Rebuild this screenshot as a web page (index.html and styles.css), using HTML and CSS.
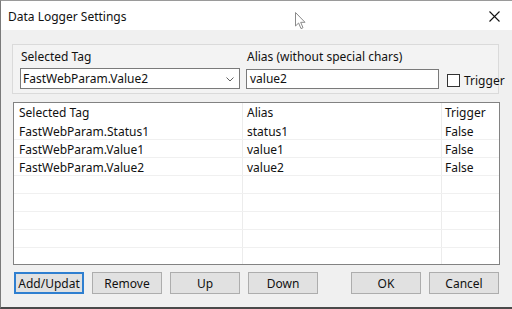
FILE: index.html
```html
<!DOCTYPE html>
<html>
<head>
<meta charset="utf-8">
<link rel="stylesheet" href="styles.css">
</head>
<body>
<div class="window">
  <div class="titlebar">
    <span class="title">Data Logger Settings</span>
    <svg class="close" width="11" height="11" viewBox="0 0 11 11"><path d="M0.5 0.5 L10.5 10.5 M10.5 0.5 L0.5 10.5" stroke="#111" stroke-width="1.1" fill="none"/></svg>
    <svg class="cursor" width="12" height="18" viewBox="0 0 12 18"><path d="M0.5 0.5 L0.5 14 L3.6 11 L6 16.6 L8 15.7 L5.7 10.3 L10 10.3 Z" fill="#fff" stroke="#8a8a8a" stroke-width="1"/></svg>
  </div>
  <div class="content">
    <div class="group">
      <div class="field tagfield">
        <div class="label">Selected Tag</div>
        <div class="combo"><span>FastWebParam.Value2</span>
          <svg class="chev" width="8" height="5" viewBox="0 0 8 5"><path d="M0.5 0.5 L4 4 L7.5 0.5" stroke="#606060" fill="none" stroke-width="1"/></svg>
        </div>
      </div>
      <div class="field aliasfield">
        <div class="label">Alias (without special chars)</div>
        <div class="textbox">value2</div>
      </div>
      <div class="trigger">
        <span class="check"></span><span class="trigtext">Trigger</span>
      </div>
    </div>
    <div class="list">
      <div class="row head"><div class="c1">Selected Tag</div><div class="c2">Alias</div><div class="c3">Trigger</div></div>
      <div class="row"><div class="c1">FastWebParam.Status1</div><div class="c2">status1</div><div class="c3">False</div></div>
      <div class="row"><div class="c1">FastWebParam.Value1</div><div class="c2">value1</div><div class="c3">False</div></div>
      <div class="row"><div class="c1">FastWebParam.Value2</div><div class="c2">value2</div><div class="c3">False</div></div>
      <div class="row"><div class="c1"></div><div class="c2"></div><div class="c3"></div></div>
      <div class="row"><div class="c1"></div><div class="c2"></div><div class="c3"></div></div>
      <div class="row"><div class="c1"></div><div class="c2"></div><div class="c3"></div></div>
      <div class="row"><div class="c1"></div><div class="c2"></div><div class="c3"></div></div>
      <div class="row"><div class="c1"></div><div class="c2"></div><div class="c3"></div></div>
    </div>
    <div class="buttons">
      <button class="btn default">Add/Updat</button>
      <button class="btn">Remove</button>
      <button class="btn">Up</button>
      <button class="btn">Down</button>
      <button class="btn ok">OK</button>
      <button class="btn">Cancel</button>
    </div>
  </div>
</div>
</body>
</html>
```

FILE: styles.css
```css
html, body {
  margin: 0;
  padding: 0;
  background: #f0f0f0;
}
body {
  font-family: "Noto Sans", "Open Sans", sans-serif;
  font-size: 12px;
  color: #111;
}
.window {
  width: 512px;
  height: 309px;
  box-sizing: border-box;
  border-left: 1px solid #7a7a7a;
  border-top: 1px solid #9a9a9a;
  border-bottom: 2px solid #4a4a4a;
  background: #f0f0f0;
  display: flex;
  flex-direction: column;
  overflow: hidden;
}
.titlebar {
  height: 29px;
  background: #fff;
  position: relative;
  display: flex;
  align-items: center;
  flex-shrink: 0;
}
.title {
  font-size: 12px;
  margin-left: 7px;
  margin-top: 2px;
}
.close {
  position: absolute;
  left: 488px;
  top: 10px;
}
.cursor {
  position: absolute;
  left: 294px;
  top: 11px;
}
.content {
  flex: 1;
  padding: 14px 0 0 11px;
  display: flex;
  flex-direction: column;
}
.group {
  width: 487px;
  height: 50px;
  box-sizing: border-box;
  border: 1px solid #dadada;
  background: #f3f3f3;
  padding: 4px 0 0 7px;
  display: flex;
  align-items: flex-start;
}
.field {
  display: flex;
  flex-direction: column;
  flex-shrink: 0;
}
.label {
  height: 16px;
  line-height: 16px;
  margin-bottom: 3px;
  padding-left: 1px;
}
.tagfield { width: 220px; }
.aliasfield { width: 193px; margin-left: 6px; }
.combo {
  height: 21px;
  box-sizing: border-box;
  border: 1px solid #7a7a7a;
  background: #fff;
  display: flex;
  align-items: center;
  justify-content: space-between;
  padding: 0 5px 0 2px;
}
.chev { margin-top: 1px; }
.textbox {
  height: 20px;
  margin-top: 1px;
  box-sizing: border-box;
  border: 1px solid #7a7a7a;
  background: #fff;
  padding-left: 3px;
  line-height: 18px;
}
.trigger {
  margin-left: 8px;
  margin-top: 23px;
  display: flex;
  align-items: center;
  flex-shrink: 0;
}
.check {
  width: 13px;
  height: 13px;
  box-sizing: border-box;
  border: 1px solid #333;
  background: #fff;
}
.trigtext {
  margin-left: 4px;
  white-space: nowrap;
}
.list {
  margin-top: 8px;
  margin-left: 1px;
  width: 487px;
  height: 163px;
  box-sizing: border-box;
  border: 1px solid #828282;
  background: #fff;
  overflow: hidden;
}
.row {
  display: flex;
  height: 18px;
  box-sizing: border-box;
  border-bottom: 1px solid #f0f0f0;
}
.row.head {
  height: 19px;
  border-bottom: none;
}
.row > div {
  box-sizing: border-box;
  padding-left: 5px;
  line-height: 19px;
  white-space: nowrap;
  overflow: hidden;
}
.row.head > div { line-height: 20px; }
.c1 { width: 229px; border-right: 1px solid #ececec; }
.c2 { width: 199px; border-right: 1px solid #ececec; padding-left: 4px !important; }
.c3 { flex: 1; padding-left: 3px !important; }
.buttons {
  display: flex;
  gap: 8px;
  margin-top: 7px;
  padding-left: 2px;
}
.btn {
  width: 70px;
  height: 22px;
  box-sizing: border-box;
  border: 1px solid #adadad;
  background: #e1e1e1;
  font-family: "Noto Sans", "Open Sans", sans-serif;
  font-size: 12px;
  color: #111;
  padding: 0;
  margin: 0;
}
.btn.default {
  border: 2px solid #2f7fd0;
}
.btn.ok {
  margin-left: 25px;
}
```
